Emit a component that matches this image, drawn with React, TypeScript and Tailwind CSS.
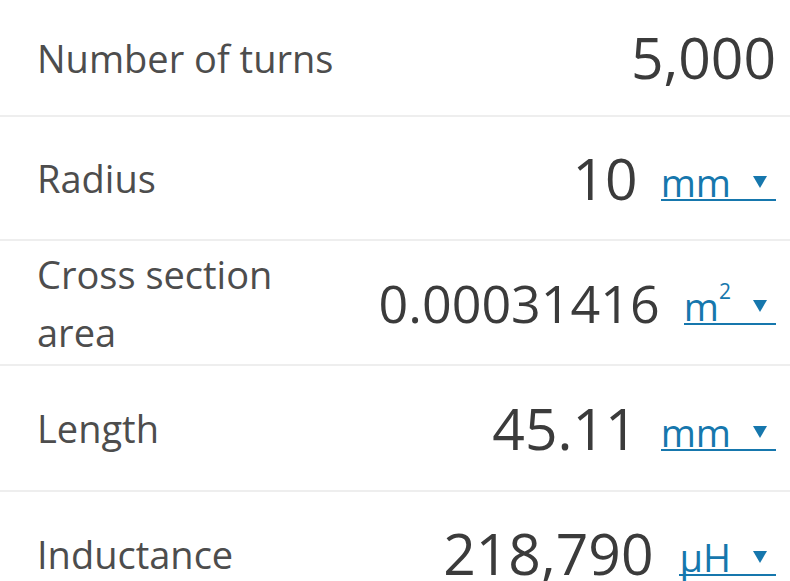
type Row = {
  label: string;
  value: string;
  valueSize: string;
  unit?: React.ReactNode;
  height: string;
};

function Unit({ children, gap }: { children: React.ReactNode; gap: string }) {
  return (
    <span
      className={`mt-[9px] inline-flex items-end border-b-2 border-[#1677ad] pr-[9px] text-[38px] leading-[34px] text-[#1677ad] ${gap}`}
    >
      <span>{children}</span>
      <svg
        width="14"
        height="12"
        viewBox="0 0 14 12"
        className="mb-[11px] ml-[22px]"
        aria-hidden
      >
        <path d="M0 0 H14 L7 12 Z" fill="#1677ad" />
      </svg>
    </span>
  );
}

const rows: Row[] = [
  {
    label: "Number of turns",
    value: "5,000",
    valueSize: "text-[57px]",
    height: "h-[117px]",
  },
  {
    label: "Radius",
    value: "10",
    valueSize: "text-[57px]",
    unit: <Unit gap="ml-[23px]">mm</Unit>,
    height: "h-[124px]",
  },
  {
    label: "Cross section area",
    value: "0.00031416",
    valueSize: "text-[52px]",
    unit: (
      <Unit gap="ml-[24px]">
        m<sup className="relative top-[2px] align-top text-[21px]">2</sup>
      </Unit>
    ),
    height: "h-[125px]",
  },
  {
    label: "Length",
    value: "45.11",
    valueSize: "text-[57px]",
    unit: <Unit gap="ml-[23px]">mm</Unit>,
    height: "h-[126px]",
  },
  {
    label: "Inductance",
    value: "218,790",
    valueSize: "text-[57px]",
    unit: <Unit gap="ml-[26px]">μH</Unit>,
    height: "h-[125px]",
  },
];

export default function App() {
  return (
    <div className="h-[581px] w-[790px] overflow-hidden bg-white font-['Open_Sans','Noto_Sans',sans-serif]">
      {rows.map((row) => (
        <div
          key={row.label}
          className={`flex items-center justify-between border-b-2 border-[#eeeeee] pl-[37px] pr-[14px] ${row.height}`}
        >
          <div className="w-[300px] text-[38px] leading-[58px] text-[#4d4d4d]">
            {row.label}
          </div>
          <div className="flex items-center">
            <span className={`leading-none text-[#3b3b3b] ${row.valueSize}`}>
              {row.value}
            </span>
            {row.unit}
          </div>
        </div>
      ))}
    </div>
  );
}
